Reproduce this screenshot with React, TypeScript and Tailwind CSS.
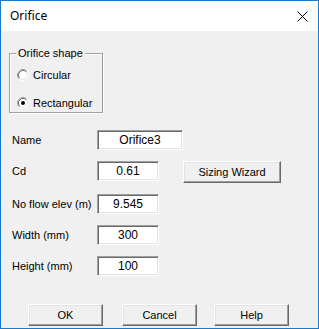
import React from 'react';

const font = { fontFamily: '"Liberation Sans", Arial, sans-serif' };

function Radio({ checked }: { checked?: boolean }) {
  return (
    <svg width="12" height="12" viewBox="0 0 12 12" className="shrink-0">
      <circle cx="6" cy="6" r="5" fill="#fff" />
      <path d="M2.11 9.89 A5.5 5.5 0 0 1 9.89 2.11" stroke="#a0a0a0" fill="none" />
      <path d="M9.89 2.11 A5.5 5.5 0 0 1 2.11 9.89" stroke="#fff" fill="none" />
      <path d="M2.82 9.18 A4.5 4.5 0 0 1 9.18 2.82" stroke="#696969" fill="none" />
      <path d="M9.18 2.82 A4.5 4.5 0 0 1 2.82 9.18" stroke="#e3e3e3" fill="none" />
      {checked && <circle cx="6" cy="6" r="2" fill="#000" />}
    </svg>
  );
}

function Field({ label, value, wide }: { label: string; value: string; wide?: boolean }) {
  return (
    <div className="flex items-center">
      <span className="w-[85px] text-[11px] text-black">{label}</span>
      <div
        className={`${wide ? 'w-[86px]' : 'w-[62px]'} h-[20px] bg-white border border-t-[#a0a0a0] border-l-[#a0a0a0] border-b-white border-r-white shadow-[inset_1px_1px_0_#696969,inset_-1px_-1px_0_#e3e3e3] flex items-center justify-center text-[12px] text-black`}
      >
        {value}
      </div>
    </div>
  );
}

function Button({ children, className = '' }: { children: React.ReactNode; className?: string }) {
  return (
    <div
      className={`h-[22px] bg-[#f0f0f0] border border-t-[#fff] border-l-[#fff] border-b-[#696969] border-r-[#696969] shadow-[inset_-1px_-1px_0_#a0a0a0,inset_1px_1px_0_#e3e3e3] flex items-center justify-center text-[11px] text-black ${className}`}
    >
      {children}
    </div>
  );
}

export default function App() {
  return (
    <div className="w-[319px] h-[329px] border border-[#1979ca] flex flex-col bg-white" style={font}>
      <div className="h-[30px] bg-white flex items-center justify-between pl-[9px] pr-[9px]">
        <span className="text-[12px] text-black" style={{ fontFamily: '"Segoe UI", "Noto Sans", sans-serif' }}>
          Orifice
        </span>
        <svg width="11" height="11" viewBox="0 0 11 11" className="mr-[1px]">
          <path d="M0.5 0.5 L10.5 10.5 M10.5 0.5 L0.5 10.5" stroke="#000" strokeWidth="1" />
        </svg>
      </div>
      <div className="flex-1 bg-[#f0f0f0] pl-[8px] pt-[22px] flex flex-col">
        <div className="relative w-[94px] h-[60px] border border-[#a0a0a0] shadow-[inset_1px_1px_0_#fff,1px_1px_0_#fff] pl-[7px] pt-[13px] flex flex-col gap-[11px]">
          <span className="absolute -top-[8px] left-[6px] px-[2px] bg-[#f0f0f0] text-[11px] leading-[14px] text-black">
            Orifice shape
          </span>
          <div className="flex items-center gap-[4px] text-[11px] text-black">
            <Radio />
            <span>Circular</span>
          </div>
          <div className="flex items-center gap-[4px] text-[11px] text-black">
            <Radio checked />
            <span>Rectangular</span>
          </div>
        </div>

        <div className="mt-[17px] pl-[3px] flex flex-col gap-[11px]">
          <Field label="Name" value="Orifice3" wide />
          <div className="flex items-start">
            <Field label="Cd" value="0.61" />
            <Button className="w-[98px] ml-[24px]">Sizing Wizard</Button>
          </div>
          <Field label="No flow elev (m)" value="9.545" />
          <Field label="Width (mm)" value="300" />
          <Field label="Height (mm)" value="100" />
        </div>

        <div className="mt-[28px] flex pl-[19px]">
          <Button className="w-[75px]">OK</Button>
          <Button className="w-[75px] ml-[19px]">Cancel</Button>
          <Button className="w-[75px] ml-[17px]">Help</Button>
        </div>
      </div>
    </div>
  );
}
